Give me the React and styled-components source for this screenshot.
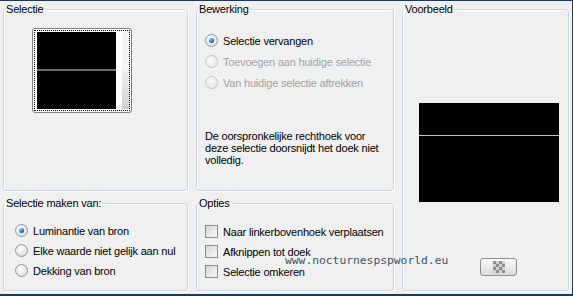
import React from 'react';
import styled, { createGlobalStyle } from 'styled-components';

const Global = createGlobalStyle`
    html, body { margin: 0; padding: 0; background: #f0f0f0; }
    body {
        font-family: "Liberation Sans", Arial, sans-serif;
        font-size: 11px;
        letter-spacing: -0.2px;
        color: #000;
    }
`;

const Window = styled.div`
    position: relative;
    width: 573px;
    height: 296px;
    box-sizing: border-box;
    background: #f0f0f0;
    border-top: 1px solid #1e3a58;
    border-right: 1px solid #1e3a58;
    border-bottom: 2px solid #1e3a58;
    padding: 2px 0 0 3px;
    display: grid;
    grid-template-columns: 185px 198px 167px;
    grid-template-rows: 188px 94px;
    column-gap: 8px;
    row-gap: 6px;
`;

const Group = styled.fieldset`
    margin: 0;
    padding: 0;
    min-width: 0;
    border: 1px solid #cbd8e2;
    border-radius: 3px;
    box-shadow: inset 1px 1px 0 #fff, 1px 1px 0 #fff;
    grid-column: ${p => p.$col};
    grid-row: ${p => p.$row};
    display: flex;
    flex-direction: column;
`;

const Legend = styled.legend`
    margin-left: 1px;
    padding: 0 1px;
    font-size: 11px;
    line-height: 13px;
`;

const Thumb = styled.div`
    margin: 12px 0 0 28px;
    width: 100px;
    height: 85px;
    box-sizing: border-box;
    border: 1px solid #858585;
    border-radius: 3px;
    background: #fff;
    padding: 1px;
`;

const Dotted = styled.div`
    height: 100%;
    box-sizing: border-box;
    border: 1px dotted #000;
    padding: 1px 0 1px 2px;
    display: flex;
`;

const ThumbImage = styled.div`
    flex: 1;
    background: linear-gradient(to bottom, #000 37px, #6e6e6e 37px, #6e6e6e 39px, #000 39px);
`;

const WhiteStrip = styled.div`
    width: 6px;
    background: #fff;
`;

const ScrollStrip = styled.div`
    width: 7px;
    background: linear-gradient(to bottom, #f4f4f4 0, #f4f4f4 45%, #d0d0d0 100%);
`;

const Options = styled.div`
    display: flex;
    flex-direction: column;
    gap: ${p => p.$gap}px;
    padding: ${p => p.$pad};
`;

const Option = styled.label`
    display: flex;
    align-items: center;
    gap: 5px;
    height: 13px;
    color: ${p => p.$disabled ? '#a3a3a3' : '#000'};
    white-space: nowrap;
`;

const Radio = styled.span`
    width: 11px;
    height: 11px;
    border-radius: 50%;
    border: 1px solid ${p => p.$disabled ? '#c8c8c8' : '#8d9aa4'};
    background: ${p => p.$disabled
        ? 'radial-gradient(circle at 40% 35%, #f8f8f8, #e4e4e4)'
        : 'radial-gradient(circle at 40% 35%, #ffffff, #d4d4d4)'};
    display: flex;
    align-items: center;
    justify-content: center;
    flex: none;
`;

const Dot = styled.span`
    width: 5px;
    height: 5px;
    border-radius: 50%;
    background: radial-gradient(circle at 35% 30%, #7ed0ff, #0a5fa8 70%, #06335e);
`;

const Check = styled.span`
    width: 11px;
    height: 11px;
    border: 1px solid #8b8b8b;
    background: linear-gradient(135deg, #d6d6d6, #f8f8f8);
    flex: none;
`;

const Note = styled.p`
    margin: 41px 0 0 8px;
    width: 184px;
    line-height: 12px;
`;

const Preview = styled.div`
    margin: 87px 0 0 16px;
    width: 140px;
    height: 99px;
    background: linear-gradient(to bottom, #000 32px, #c4c4c4 32px, #c4c4c4 33px, #000 33px);
`;

const Button = styled.div`
    margin: 56px 0 0 77px;
    width: 37px;
    height: 18px;
    box-sizing: border-box;
    border: 1px solid #8e8e8e;
    border-radius: 3px;
    background: linear-gradient(to bottom, #fbfbfb, #dadada);
    display: flex;
    align-items: center;
    justify-content: center;
`;

const Watermark = styled.div`
    position: absolute;
    left: 285px;
    top: 253px;
    font-family: "DejaVu Sans Mono", monospace;
    font-size: 11.3px;
    letter-spacing: 0;
    color: #425669;
    pointer-events: none;
`;

const Checker = () => (
    <svg width="12" height="12" viewBox="0 0 12 12">
        {[0, 1, 2, 3].flatMap(r => [0, 1, 2, 3].map(c => (
            <rect key={`${r}-${c}`} x={c * 3} y={r * 3} width="3" height="3"
                fill={(r + c) % 2 ? '#cfcfcf' : '#8f8f8f'} />
        )))}
    </svg>
);

const RadioOption = ({ checked, disabled, children }) => (
    <Option $disabled={disabled}>
        <Radio $disabled={disabled}>{checked && <Dot />}</Radio>
        {children}
    </Option>
);

const CheckOption = ({ children }) => (
    <Option>
        <Check />
        {children}
    </Option>
);

export default function App() {
    return (
        <>
            <Global />
            <Window>
                <Group $col="1" $row="1">
                    <Legend>Selectie</Legend>
                    <Thumb>
                        <Dotted>
                            <ThumbImage />
                            <WhiteStrip />
                            <ScrollStrip />
                        </Dotted>
                    </Thumb>
                </Group>

                <Group $col="2" $row="1">
                    <Legend>Bewerking</Legend>
                    <Options $gap={8} $pad="18px 0 0 8px">
                        <RadioOption checked>Selectie vervangen</RadioOption>
                        <RadioOption disabled>Toevoegen aan huidige selectie</RadioOption>
                        <RadioOption disabled>Van huidige selectie aftrekken</RadioOption>
                    </Options>
                    <Note>De oorspronkelijke rechthoek voor deze selectie doorsnijdt het doek niet volledig.</Note>
                </Group>

                <Group $col="3" $row="1 / span 2">
                    <Legend>Voorbeeld</Legend>
                    <Preview />
                    <Button><Checker /></Button>
                </Group>

                <Group $col="1" $row="2">
                    <Legend>Selectie maken van:</Legend>
                    <Options $gap={7} $pad="14px 0 0 11px">
                        <RadioOption checked>Luminantie van bron</RadioOption>
                        <RadioOption>Elke waarde niet gelijk aan nul</RadioOption>
                        <RadioOption>Dekking van bron</RadioOption>
                    </Options>
                </Group>

                <Group $col="2" $row="2">
                    <Legend>Opties</Legend>
                    <Options $gap={7} $pad="15px 0 0 8px">
                        <CheckOption>Naar linkerbovenhoek verplaatsen</CheckOption>
                        <CheckOption>Afknippen tot doek</CheckOption>
                        <CheckOption>Selectie omkeren</CheckOption>
                    </Options>
                </Group>

                <Watermark>www.nocturnespspworld.eu</Watermark>
            </Window>
        </>
    );
}
